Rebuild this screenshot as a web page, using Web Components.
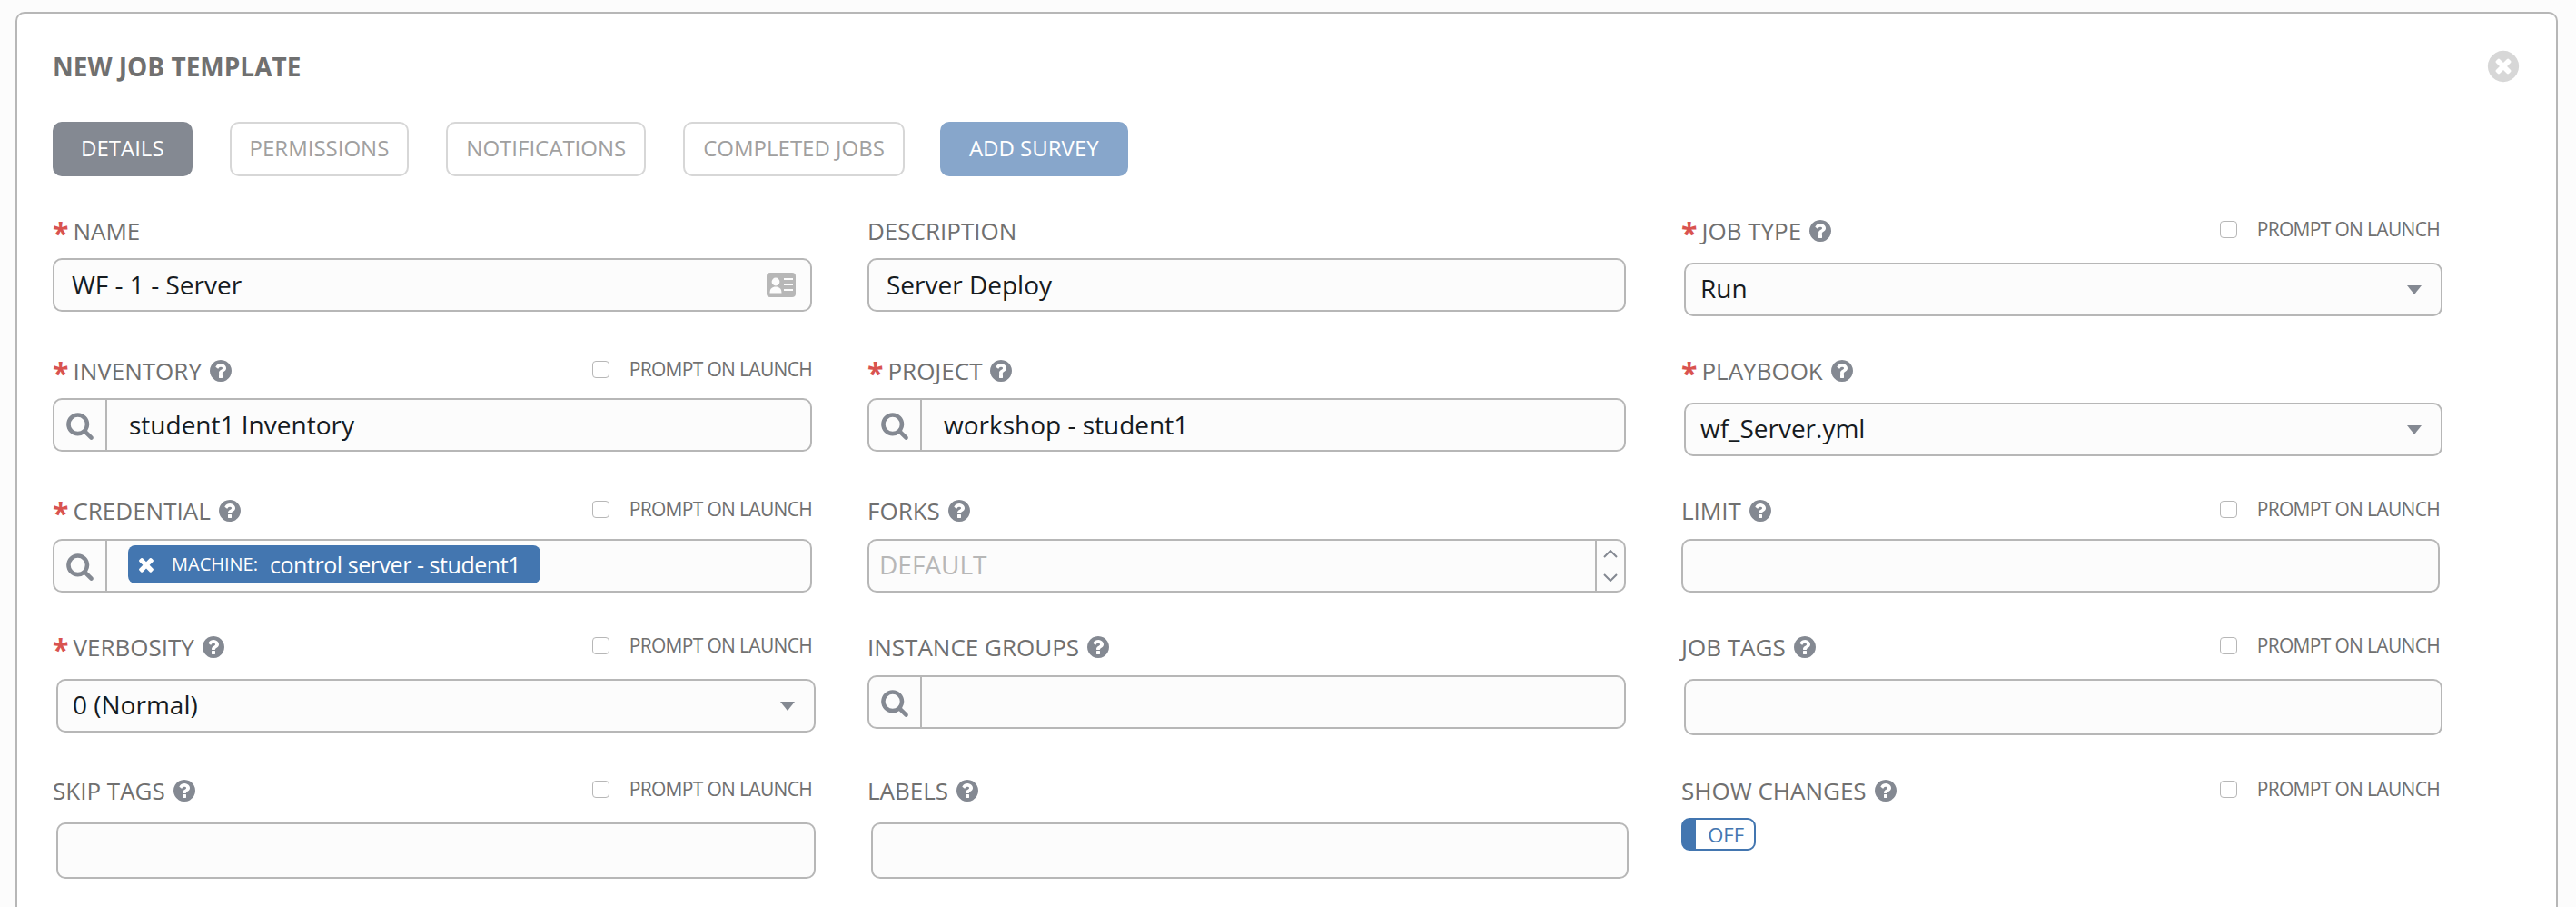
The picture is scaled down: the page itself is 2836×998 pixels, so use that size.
<!DOCTYPE html>
<html>
<head>
<meta charset="utf-8">
<title>New Job Template</title>
<style>
    html, body { margin: 0; height: 100%; overflow: hidden; }
    body { background: #fcfcfc; font-family: "Open Sans", sans-serif; }
</style>
</head>
<body>
<job-form heading="NEW JOB TEMPLATE">
    <job-tab slot="tabs" active>DETAILS</job-tab>
    <job-tab slot="tabs">PERMISSIONS</job-tab>
    <job-tab slot="tabs">NOTIFICATIONS</job-tab>
    <job-tab slot="tabs">COMPLETED JOBS</job-tab>
    <job-tab slot="tabs" survey>ADD SURVEY</job-tab>

    <job-field label="NAME" required><job-input card value="WF - 1 - Server"></job-input></job-field>
    <job-field label="DESCRIPTION"><job-input value="Server Deploy"></job-input></job-field>
    <job-field label="JOB TYPE" required help prompt shifted style="--l:3px;--r:-3px"><job-select value="Run"></job-select></job-field>

    <job-field label="INVENTORY" required help prompt><job-lookup value="student1 Inventory"></job-lookup></job-field>
    <job-field label="PROJECT" required help><job-lookup value="workshop - student1"></job-lookup></job-field>
    <job-field label="PLAYBOOK" required help shifted style="--l:3px;--r:-3px"><job-select value="wf_Server.yml"></job-select></job-field>

    <job-field label="CREDENTIAL" required help prompt raised>
        <job-lookup><job-tag kind="MACHINE:">control server - student1</job-tag></job-lookup>
    </job-field>
    <job-field label="FORKS" help raised><job-input spinner placeholder="DEFAULT"></job-input></job-field>
    <job-field label="LIMIT" help prompt raised><job-input></job-input></job-field>

    <job-field label="VERBOSITY" required help prompt shifted raised style="--l:4px;--r:-4px"><job-select value="0 (Normal)"></job-select></job-field>
    <job-field label="INSTANCE GROUPS" help raised><job-lookup></job-lookup></job-field>
    <job-field label="JOB TAGS" help prompt shifted raised style="--l:3px;--r:-3px"><job-input tall></job-input></job-field>

    <job-field label="SKIP TAGS" help prompt shifted style="--l:4px;--r:-4px"><job-input tall></job-input></job-field>
    <job-field label="LABELS" help shifted style="--l:4px;--r:-3px"><job-input tall></job-input></job-field>
    <job-field label="SHOW CHANGES" help prompt><job-toggle></job-toggle></job-field>
</job-form>

<script>
// font awesome 4 glyphs, all on a 1792 grid
const ICONS = {
    search: "M1216 832q0-185-131.5-316.5T768 384 451.5 515.5 320 832t131.5 316.5T768 1280t316.5-131.5T1216 832zm512 832q0 52-38 90t-90 38q-54 0-90-38l-343-342q-179 124-399 124-143 0-273.5-55.5t-225-150-150-225T64 832t55.5-273.5 150-225 225-150T768 128t273.5 55.5 225 150 150 225T1472 832q0 220-124 399l343 343q37 37 37 90z",
    help: "M1024 1376v-192q0-14-9-23t-23-9H800q-14 0-23 9t-9 23v192q0 14 9 23t23 9h192q14 0 23-9t9-23zm256-672q0-88-55.5-163T1086 425t-170-41q-243 0-371 213-15 24 8 42l132 100q7 6 19 6 16 0 25-12 53-68 86-92 34-24 86-24 48 0 85.5 26t37.5 59q0 38-20 61t-68 45q-63 28-115.5 86.5T768 1020v36q0 14 9 23t23 9h192q14 0 23-9t9-23q0-19 21.5-49.5T1100 957q32-18 49-28.5t46-35 44.5-48 28-60.5 12.5-81zm384 192q0 209-103 385.5T1281.5 1561 896 1664t-385.5-103T231 1281.5 128 896t103-385.5T510.5 231 896 128t385.5 103T1561 510.5 1664 896z",
    close: "M1277 1122q0-26-19-45L1077 896l181-181q19-19 19-45 0-27-19-46l-90-90q-19-19-46-19-26 0-45 19L896 715 715 534q-19-19-45-19-27 0-46 19l-90 90q-19 19-19 46 0 26 19 45l181 181-181 181q-19 19-19 45 0 27 19 46l90 90q19 19 46 19 26 0 45-19l181-181 181 181q19 19 45 19 27 0 46-19l90-90q19-19 19-46zm387-226q0 209-103 385.5T1281.5 1561 896 1664t-385.5-103T231 1281.5 128 896t103-385.5T510.5 231 896 128t385.5 103T1561 510.5 1664 896z",
    times: "M1490 1322q0 40-28 68l-136 136q-28 28-68 28t-68-28l-294-294-294 294q-28 28-68 28t-68-28l-136-136q-28-28-28-68t28-68l294-294-294-294q-28-28-28-68t28-68l136-136q28-28 68-28t68 28l294 294 294-294q28-28 68-28t68 28l136 136q28 28 28 68t-28 68l-294 294 294 294q28 28 28 68z"
};

function icon(name, size, color) {
    return `<svg width="${size}" height="${size}" viewBox="0 0 1792 1792" fill="${color}" style="display:block;flex:none"><path d="${ICONS[name]}"/></svg>`;
}

const BOX = `
    border: 2px solid #b7b7b7;
    border-radius: 10px;
    background: #fcfcfc;
    box-sizing: border-box;
    color: #161b1f;
    font-size: 28px;
`;

class JobForm extends HTMLElement {
    connectedCallback() {
        this.inner = this.attachShadow({ mode: "open" });
        this.inner.innerHTML = `
            <style>
                :host {
                    display: block;
                    box-sizing: border-box;
                    margin: 13px 20px 0 17px;
                    height: 985px;
                    padding: 41px 38px 0 39px;
                    background: #fff;
                    border: 2px solid #b7b7b7;
                    border-bottom: 0;
                    border-radius: 10px 10px 0 0;
                }
                header {
                    display: flex;
                    justify-content: space-between;
                    align-items: center;
                    height: 34px;
                    color: #707070;
                    font-size: 28px;
                    font-weight: 700;
                }
                nav { display: flex; gap: 41px; margin-top: 44px; }
                main {
                    display: grid;
                    grid-template-columns: 897px 896px 896px;
                    grid-template-rows: 154px 155px 150px 157px auto;
                    margin-top: 40px;
                }
            </style>
            <header><span>${this.getAttribute("heading")}</span>${icon("close", 40, "#d7d7d7")}</header>
            <nav><slot name="tabs"></slot></nav>
            <main><slot></slot></main>
        `;
    }
}

class JobTab extends HTMLElement {
    connectedCallback() {
        this.inner = this.attachShadow({ mode: "open" });
        this.inner.innerHTML = `
            <style>
                :host {
                    display: flex;
                    align-items: center;
                    box-sizing: border-box;
                    height: 60px;
                    padding: 0 20px 3px;
                    border: 2px solid #d7d7d7;
                    border-radius: 10px;
                    color: #a0a0a0;
                    background: #fff;
                    font-size: 24px;
                }
                :host([active]) { background: #848992; border-color: #848992; color: #fff; padding: 0 29px 3px; }
                :host([survey]) { background: #87a6cb; border-color: #87a6cb; color: #fff; margin-left: -2px; padding: 0 30px 3px; }
            </style>
            <slot></slot>
        `;
    }
}

class JobField extends HTMLElement {
    connectedCallback() {
        this.inner = this.attachShadow({ mode: "open" });
        let required = this.hasAttribute("required") ? `<b>*</b>` : "";
        let help = this.hasAttribute("help") ? `<i>${icon("help", 28, "#848992")}</i>` : "";
        let prompt = this.hasAttribute("prompt") ? `<label><u></u>PROMPT ON LAUNCH</label>` : "";
        this.inner.innerHTML = `
            <style>
                :host { display: block; padding-right: 61px; min-width: 0; }
                .head {
                    display: flex;
                    justify-content: space-between;
                    align-items: center;
                    height: 40px;
                    margin-bottom: 10px;
                    color: #707070;
                    font-size: 26px;
                }
                :host([shifted]) .head { margin-bottom: 15px; }
                :host([raised]) .head { margin-top: -1px; margin-bottom: 11px; }
                :host([raised][shifted]) .head { margin-bottom: 15px; }
                .name { display: flex; align-items: center; }
                b { color: #d9534f; font-size: 32px; font-weight: 700; margin-right: 5px; line-height: 32px; height: 26px; }
                i { margin-left: 7px; }
                label { display: flex; align-items: center; gap: 22px; font-size: 21px; letter-spacing: -0.68px; margin-top: -4px; }
                u { width: 19px; height: 19px; box-sizing: border-box; border: 1px solid #b7b7b7; border-radius: 4px; background: #fff; }
                .body { display: block; }
                :host([shifted]) .body { margin: 0 var(--r) 0 var(--l); }
            </style>
            <div class="head"><span class="name">${required}${this.getAttribute("label")}${help}</span>${prompt}</div>
            <div class="body"><slot></slot></div>
        `;
    }
}

class JobInput extends HTMLElement {
    connectedCallback() {
        this.inner = this.attachShadow({ mode: "open" });
        let value = this.getAttribute("value") || "";
        let placeholder = this.getAttribute("placeholder");
        let tail = "";
        if (this.hasAttribute("card")) {
            // contact card, not in the 4.x glyphs above
            tail = `<svg class="card" width="32" height="27" viewBox="0 0 32 27"><rect width="32" height="27" rx="4" fill="#b7b7b7"/><circle cx="10" cy="10" r="4.4" fill="#fcfcfc"/><path d="M3.5 22.5c0-5 2.5-7 6.5-7s6.5 2 6.5 7z" fill="#fcfcfc"/><path d="M19 7h10M19 13h10M19 19h10" stroke="#fcfcfc" stroke-width="2.2"/></svg>`;
        }
        if (this.hasAttribute("spinner")) {
            tail = `<span class="spin">
                <svg width="16" height="9" viewBox="0 0 16 9" fill="none" stroke="#848992" stroke-width="2"><path d="M1 8l7-7 7 7"/></svg>
                <svg width="16" height="9" viewBox="0 0 16 9" fill="none" stroke="#848992" stroke-width="2"><path d="M1 1l7 7 7-7"/></svg>
            </span>`;
        }
        this.inner.innerHTML = `
            <style>
                :host {
                    display: flex;
                    align-items: center;
                    justify-content: space-between;
                    height: 59px;
                    padding-left: 19px;
                    ${BOX}
                }
                :host([tall]) { height: 62px; }
                :host([spinner]) { padding-left: 11px; }
                .val { padding-bottom: 2px; }
                .ph { color: #b7b7b7; padding-bottom: 4px; }
                .card { margin-right: 16px; }
                .spin {
                    display: flex;
                    flex-direction: column;
                    align-items: center;
                    justify-content: center;
                    gap: 17px;
                    align-self: stretch;
                    width: 30px;
                    border-left: 2px solid #b7b7b7;
                }
            </style>
            <span class="${placeholder ? "ph" : "val"}">${placeholder || value}</span>${tail}
        `;
    }
}

class JobLookup extends HTMLElement {
    connectedCallback() {
        this.inner = this.attachShadow({ mode: "open" });
        let value = this.getAttribute("value") || "";
        this.inner.innerHTML = `
            <style>
                :host {
                    display: flex;
                    align-items: stretch;
                    height: 59px;
                    ${BOX}
                }
                .btn {
                    display: flex;
                    align-items: center;
                    justify-content: center;
                    flex: none;
                    width: 58px;
                    box-sizing: border-box;
                    border-right: 2px solid #b7b7b7;
                }
                .val { display: flex; align-items: flex-start; padding-left: 24px; line-height: 54px; }
            </style>
            <span class="btn">${icon("search", 32, "#848992")}</span>
            <span class="val">${value}<slot></slot></span>
        `;
    }
}

class JobSelect extends HTMLElement {
    connectedCallback() {
        this.inner = this.attachShadow({ mode: "open" });
        this.inner.innerHTML = `
            <style>
                :host {
                    display: flex;
                    align-items: center;
                    justify-content: space-between;
                    height: 59px;
                    padding: 0 21px 0 16px;
                    ${BOX}
                }
                span { padding-bottom: 4px; }
                s { width: 0; height: 0; border: 8px solid transparent; border-top: 10px solid #848992; border-bottom: 0; }
            </style>
            <span>${this.getAttribute("value")}</span><s></s>
        `;
    }
}

class JobTag extends HTMLElement {
    connectedCallback() {
        this.inner = this.attachShadow({ mode: "open" });
        this.inner.innerHTML = `
            <style>
                :host {
                    display: inline-flex;
                    align-items: center;
                    height: 42px;
                    margin-top: 5px;
                    margin-left: -1px;
                    padding: 0 22px 0 8px;
                    background: #4376b0;
                    border-radius: 8px;
                    color: #fff;
                    font-size: 25px;
                    letter-spacing: -0.45px;
                    line-height: 40px;
                }
                em { font-style: normal; font-size: 20px; letter-spacing: 0; margin: 0 13px 0 16px; }
            </style>
            ${icon("times", 24, "#fff")}<em>${this.getAttribute("kind")}</em><slot></slot>
        `;
    }
}

class JobToggle extends HTMLElement {
    connectedCallback() {
        this.inner = this.attachShadow({ mode: "open" });
        this.inner.innerHTML = `
            <style>
                :host {
                    display: flex;
                    align-items: center;
                    justify-content: flex-end;
                    box-sizing: border-box;
                    width: 82px;
                    height: 36px;
                    padding-right: 11px;
                    border: 2px solid #4376b0;
                    border-left: 16px solid #4376b0;
                    border-radius: 9px;
                    background: #fff;
                    color: #4376b0;
                    font-size: 22px;
                }
            </style>
            OFF
        `;
    }
}

customElements.define("job-form", JobForm);
customElements.define("job-tab", JobTab);
customElements.define("job-field", JobField);
customElements.define("job-input", JobInput);
customElements.define("job-lookup", JobLookup);
customElements.define("job-select", JobSelect);
customElements.define("job-tag", JobTag);
customElements.define("job-toggle", JobToggle);
</script>
</body>
</html>
